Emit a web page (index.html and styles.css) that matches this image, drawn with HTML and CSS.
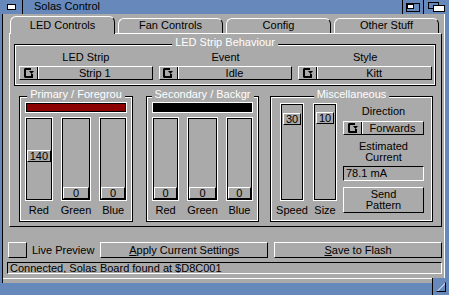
FILE: index.html
```html
<!DOCTYPE html>
<html lang="en">
<head>
	<meta charset="UTF-8">
	<title>Solas Control</title>
	<link rel="stylesheet" href="styles.css">
</head>
<body>
<div class="window">
	<div class="titlebar">
		<div class="gadget close"><span class="close-box"></span></div>
		<div class="title">Solas Control</div>
		<div class="gadget zoom">
			<svg width="14" height="9" viewBox="0 0 14 9"><rect x="0.5" y="0.5" width="13" height="8" fill="none" stroke="#000"/><rect x="1.5" y="1.5" width="6" height="4" fill="#fff" stroke="#000"/></svg>
		</div>
		<div class="gadget depth">
			<svg width="17" height="10" viewBox="0 0 17 10"><rect x="0.5" y="0.5" width="10" height="6" fill="none" stroke="#000"/><rect x="5.5" y="3.5" width="11" height="6" fill="#fff" stroke="#000"/></svg>
		</div>
	</div>
	<div class="frame">
		<div class="lborder"></div>
		<div class="main">
			<div class="content">
				<div class="tabs">
					<div class="tab active">LED Controls</div>
					<div class="tab">Fan Controls</div>
					<div class="tab">Config</div>
					<div class="tab">Other Stuff</div>
				</div>
				<div class="panel">
					<div class="group strip">
						<span class="group-title">LED Strip Behaviour</span>
						<div class="strip-cols">
							<div class="field">
								<div class="label">LED Strip</div>
								<div class="cycle">
									<span class="cycle-icon"><svg width="10" height="10" viewBox="0 0 10 10"><path d="M1 0h6v2H2v6h5V6h2v4H1L0 9V1z"/><path d="M5 3h5L7.5 6z"/></svg></span>
									<span class="cycle-text">Strip 1</span>
								</div>
							</div>
							<div class="field">
								<div class="label">Event</div>
								<div class="cycle">
									<span class="cycle-icon"><svg width="10" height="10" viewBox="0 0 10 10"><path d="M1 0h6v2H2v6h5V6h2v4H1L0 9V1z"/><path d="M5 3h5L7.5 6z"/></svg></span>
									<span class="cycle-text">Idle</span>
								</div>
							</div>
							<div class="field">
								<div class="label">Style</div>
								<div class="cycle">
									<span class="cycle-icon"><svg width="10" height="10" viewBox="0 0 10 10"><path d="M1 0h6v2H2v6h5V6h2v4H1L0 9V1z"/><path d="M5 3h5L7.5 6z"/></svg></span>
									<span class="cycle-text">Kitt</span>
								</div>
							</div>
						</div>
					</div>
					<div class="lower">
						<div class="group colour primary">
							<span class="group-title">Primary / Foregrou</span>
							<div class="bar red"></div>
							<div class="sliders">
								<div class="slider-col"><div class="slider"><div class="knob" style="margin-bottom:37px">140</div></div><div class="slider-label">Red</div></div>
								<div class="slider-col"><div class="slider"><div class="knob">0</div></div><div class="slider-label">Green</div></div>
								<div class="slider-col"><div class="slider"><div class="knob">0</div></div><div class="slider-label">Blue</div></div>
							</div>
						</div>
						<div class="group colour secondary">
							<span class="group-title">Secondary / Backgr</span>
							<div class="bar black"></div>
							<div class="sliders">
								<div class="slider-col"><div class="slider"><div class="knob">0</div></div><div class="slider-label">Red</div></div>
								<div class="slider-col"><div class="slider"><div class="knob">0</div></div><div class="slider-label">Green</div></div>
								<div class="slider-col"><div class="slider"><div class="knob">0</div></div><div class="slider-label">Blue</div></div>
							</div>
						</div>
						<div class="group misc">
							<span class="group-title">Miscellaneous</span>
							<div class="misc-sliders">
								<div class="slider-col"><div class="slider tall"><div class="knob" style="margin-bottom:74px">30</div></div><div class="slider-label">Speed</div></div>
								<div class="slider-col"><div class="slider tall"><div class="knob" style="margin-bottom:75px">10</div></div><div class="slider-label">Size</div></div>
							</div>
							<div class="misc-side">
								<div class="label">Direction</div>
								<div class="cycle dir">
									<span class="cycle-icon"><svg width="10" height="10" viewBox="0 0 10 10"><path d="M1 0h6v2H2v6h5V6h2v4H1L0 9V1z"/><path d="M5 3h5L7.5 6z"/></svg></span>
									<span class="cycle-text">Forwards</span>
								</div>
								<div class="estimate">Estimated<br>Current</div>
								<div class="readout">78.1 mA</div>
								<div class="button send">Send<br>Pattern</div>
							</div>
						</div>
					</div>
				</div>
				<div class="actions">
					<div class="checkbox"></div>
					<span class="check-label">Live Preview</span>
					<div class="button wide"><u>A</u>pply Current Settings</div>
					<div class="button wide"><u>S</u>ave to Flash</div>
				</div>
				<div class="status">Connected, Solas Board found at $D8C001</div>
			</div>
			<div class="gap"></div>
		</div>
		<div class="rborder"></div>
	</div>
	<div class="bottom"></div>
	<div class="sizer">
		<svg width="16" height="17" viewBox="0 0 16 17"><path d="M4 13.5L12.5 5" stroke="#fff"/><path d="M12.5 4.5v9.5M3.5 13.5h9.5" stroke="#000"/></svg>
	</div>
</div>
</body>
</html>
```

FILE: styles.css
```css
*{
	box-sizing: border-box;
}
html,body{
	margin: 0;padding: 0;background: #6688bb;
}
body{
	font-family: "Liberation Sans", Arial, sans-serif;font-size: 11px;line-height: 12px;color: #000;
}
.window{
	width: 449px;height: 295px;
	position: relative;overflow: hidden;
	background: #6688bb;
}

/* title bar */
.titlebar{
	display: flex;height: 14px;
}
.gadget{
	display: flex;align-items: center;justify-content: center;
}
.close{
	width: 23px;border-right: 1px solid #000;
	align-items: flex-start;justify-content: flex-start;
	padding: 4px 0 0 7px;
}
.close-box{
	display: block;width: 9px;height: 6px;
	border: 1px solid #000;background: #fff;
}
.title{
	flex: 1;padding-left: 11px;line-height: 13px;
}
.zoom{
	width: 21px;border-left: 1px solid #000;
}
.depth{
	width: 26px;border-left: 1px solid #000;
}

/* window frame */
.frame{
	display: flex;height: 269px;
}
.lborder{
	width: 3px;border-right: 1px solid #000;
}
.main{
	width: 442px;background: #aaa;
}
.rborder{
	width: 4px;
}
.content{
	height: 265px;
	padding: 2px 2px 0 4px;
	border-right: 1px solid #fff;border-bottom: 1px solid #fff;
}
.gap{
	height: 4px;
}
.bottom{
	height: 12px;
}
.sizer{
	position: absolute;right: 0;bottom: 0;
	width: 17px;height: 17px;
	background: #6688bb;border-left: 1px solid #000;
}
.sizer svg{
	display: block;
}

/* tabs */
.tabs{
	display: flex;align-items: flex-end;gap: 3px;
	height: 17px;padding-left: 3px;
}
.tab{
	width: 105px;height: 15px;
	border: 1px solid;border-bottom: 0;
	border-color: #fff #000 #000 #fff;
	border-radius: 6px 6px 0 0;
	text-align: center;line-height: 13px;
}
.tab.active{
	height: 18px;margin-bottom: -1px;
	position: relative;z-index: 1;
	background: #aaa;line-height: 16px;
}
.panel{
	height: 194px;margin-left: 2px;
	border: 1px solid;border-color: #fff #000 #000 #fff;
	padding: 10px 5px 3px 4px;
}

/* framed groups */
.group{
	position: relative;
	border: 1px solid #000;
	box-shadow: inset 0 0 0 1px #fff;
}
.group-title{
	position: absolute;top: -9px;left: 50%;transform: translateX(-50%);
	padding: 0 3px;background: #aaa;color: #fff;
	white-space: nowrap;line-height: 12px;
}
.strip{
	padding: 6px 3px 5px 4px;
}
.strip-cols{
	display: grid;grid-template-columns: repeat(3, 1fr);column-gap: 6px;
}
.label{
	text-align: center;line-height: 12px;
}
.field .label{
	margin-bottom: 3px;
}

/* cycle gadgets and buttons */
.cycle{
	display: flex;height: 14px;
	border: 1px solid;border-color: #fff #000 #000 #fff;
}
.cycle-icon{
	display: flex;align-items: center;justify-content: center;
	width: 18px;border-right: 1px solid #000;
	box-shadow: 1px 0 0 #fff;
}
.cycle-icon svg{
	display: block;
}
.cycle-text{
	flex: 1;text-align: center;line-height: 12px;white-space: nowrap;
}
.button{
	display: flex;align-items: center;justify-content: center;
	border: 1px solid;border-color: #fff #000 #000 #fff;
	text-align: center;white-space: nowrap;
}
.button u{
	text-decoration: underline;text-underline-offset: 1px;
}

/* colour groups */
.lower{
	display: flex;margin-top: 10px;padding-left: 5px;
}
.colour{
	padding: 5px 5px 5px 5px;
}
.primary{
	width: 114px;
}
.secondary{
	width: 113px;margin-left: 13px;
}
.bar{
	height: 11px;
	border: 1px solid #fff;
	box-shadow: inset 0 0 0 1px #000;
}
.red{
	background: #8c0000;
}
.black{
	background: #000;
}
.sliders{
	display: grid;grid-template-columns: repeat(3, 1fr);column-gap: 8px;
	margin-top: 4px;
}
.slider{
	display: flex;flex-direction: column;justify-content: flex-end;
	height: 84px;padding: 1px;
	border: 1px solid #fff;
	box-shadow: inset 0 0 0 1px #000;
}
.slider.tall{
	height: 98px;padding: 1px 2px;
}
.knob{
	height: 12px;
	border: 1px solid;border-color: #fff #000 #000 #fff;
	text-align: center;line-height: 10px;
}
.slider-label{
	display: flex;justify-content: center;
	margin-top: 3px;line-height: 12px;white-space: nowrap;
}

/* misc group */
.misc{
	display: flex;width: 163px;margin-left: 11px;
	padding: 6px 8px 5px 9px;
}
.misc-sliders{
	display: flex;gap: 9px;
}
.misc-sliders .slider-col{
	width: 24px;
}
.misc-side{
	width: 81px;margin-left: 6px;
}
.misc-side .label{
	margin-top: 2px;
}
.dir{
	margin-top: 4px;
}
.estimate{
	margin-top: 6px;text-align: center;line-height: 11px;
}
.readout{
	height: 15px;margin-top: 3px;padding-left: 2px;
	border: 1px solid;border-color: #000 #fff #fff #000;
	line-height: 13px;
}
.send{
	height: 26px;margin-top: 6px;line-height: 11px;
}

/* bottom row */
.actions{
	display: flex;align-items: center;
	height: 16px;margin-top: 15px;
}
.checkbox{
	width: 19px;height: 16px;margin-left: 1px;
	border: 1px solid;border-color: #fff #000 #000 #fff;
}
.check-label{
	margin: 0 6px 0 5px;white-space: nowrap;
}
.wide{
	flex: 1;height: 16px;line-height: 14px;
}
.wide + .wide{
	margin-left: 6px;
}
.status{
	height: 12px;margin-top: 4px;padding-left: 2px;
	border: 1px solid;border-color: #000 #fff #fff #000;
	line-height: 10px;white-space: nowrap;overflow: hidden;
}
```
